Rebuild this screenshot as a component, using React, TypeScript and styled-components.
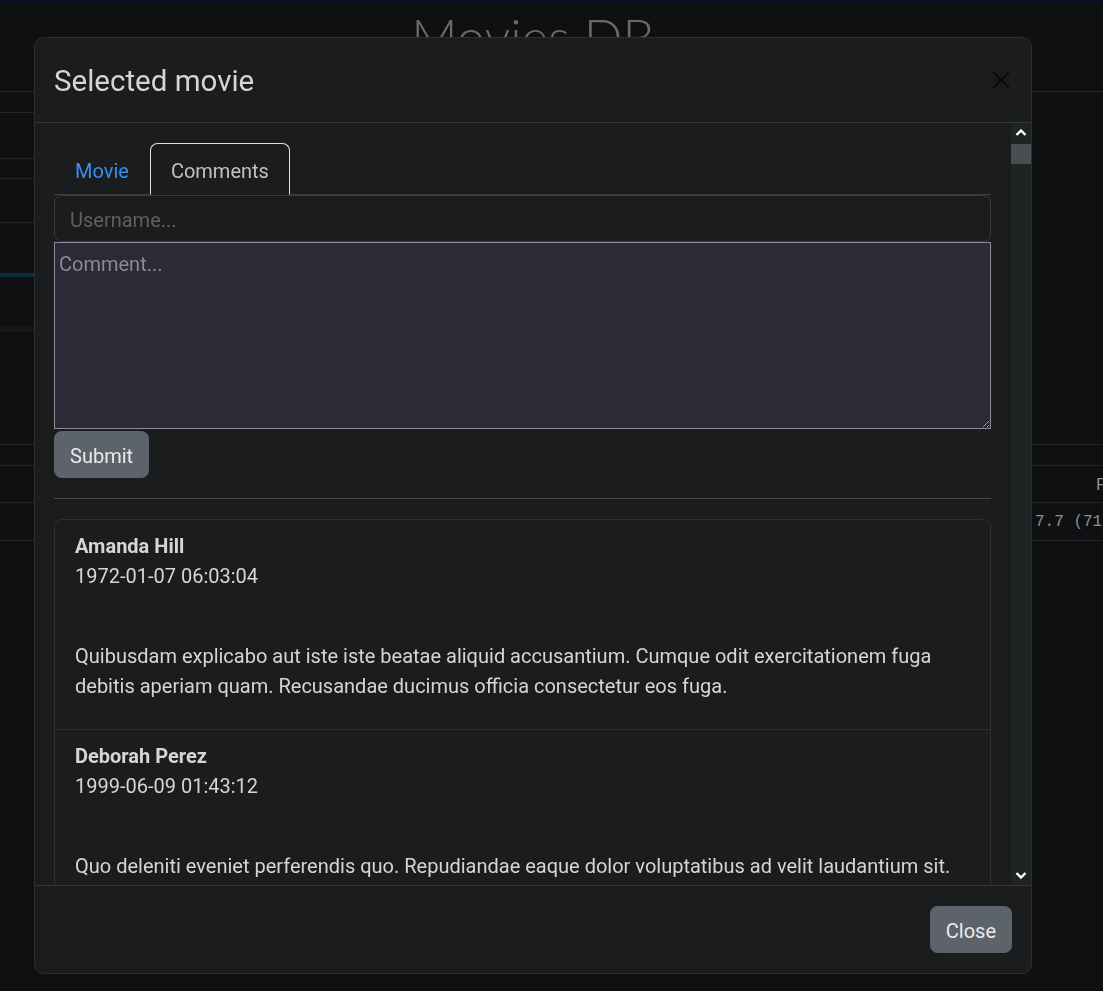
import styled, { createGlobalStyle } from "styled-components"

const GlobalStyle = createGlobalStyle`
  html, body {
    margin: 0;
    padding: 0;
    background: #0e1011;
    overflow: hidden;
  }
  body {
    font-family: Roboto, "Liberation Sans", sans-serif;
    color: #d8d5cf;
  }
  * { box-sizing: border-box; }
`

/* ---------- page behind the modal ---------- */

const Page = styled.div`
  min-height: 100vh;
  background: #0e1011;
  border-top: 2px solid #0b0b3c;
`

const Masthead = styled.header`
  height: 90px;
  border-bottom: 1px solid #25292b;
  display: flex;
  justify-content: center;
  padding-right: 37px;
`

const SiteTitle = styled.h1`
  margin: 0;
  padding-top: 9px;
  font-family: Lato, "Open Sans", sans-serif;
  font-weight: 300;
  font-size: 51px;
  line-height: 1;
  color: #6a6a6a;
`

const Filters = styled.div`
  height: 352px;
  display: flex;
  flex-direction: column;
  width: 360px;
`

const FilterRow = styled.div<{ $h: number }>`
  height: ${p => p.$h}px;
  border-bottom: 1px solid #22262a;
`

const Track = styled.div<{ $color: string; $gap: number; $h: number }>`
  margin-top: ${p => p.$gap}px;
  height: ${p => p.$h}px;
  background: ${p => p.$color};
`

const Table = styled.div`
  border-top: 1px solid #22262a;
  white-space: nowrap;
`

const TableRow = styled.div<{ $h: number; $indent: number }>`
  height: ${p => p.$h}px;
  border-bottom: 1px solid #22262a;
  display: grid;
  grid-template-columns: ${p => p.$indent}px auto;
  align-items: center;
  color: #8e8e8e;
`

const HeadCell = styled.span`
  font-size: 17px;
`

const MonoCell = styled.span`
  font-family: "Liberation Mono", monospace;
  font-size: 16px;
`

/* ---------- modal ---------- */

const Dialog = styled.div`
  position: fixed;
  top: 37px;
  left: 34px;
  width: 998px;
  height: 937px;
  display: flex;
  flex-direction: column;
  background: #1b1c1e;
  border: 1px solid #2c2e31;
  border-radius: 10px;
  overflow: hidden;
`

const Header = styled.div`
  flex: none;
  height: 85px;
  padding: 0 20px 0 19px;
  display: flex;
  align-items: center;
  justify-content: space-between;
  border-bottom: 1px solid #36393c;
`

const Title = styled.h5`
  margin: 0;
  font-size: 29.5px;
  font-weight: 400;
  line-height: 1.2;
  color: #d8d5cf;
  padding-top: 3px;
`

const CloseX = styled.button`
  width: 20px;
  height: 20px;
  padding: 0;
  border: 0;
  background: none;
  display: flex;
  color: #0a0a0a;
`

const BodyFrame = styled.div`
  flex: 1;
  min-height: 0;
  display: flex;
`

const Body = styled.div`
  flex: 1;
  min-width: 0;
  overflow: hidden;
  padding: 20px 20px 0 19px;
`

const ScrollRail = styled.div`
  flex: none;
  width: 20px;
  display: flex;
  flex-direction: column;
  background: #202324;
`

const ScrollArrow = styled.div<{ $end?: boolean }>`
  height: 20px;
  display: flex;
  align-items: center;
  justify-content: center;
  margin-top: ${p => (p.$end ? "auto" : "0")};
  color: #ffffff;
`

const ScrollThumb = styled.div`
  height: 20px;
  margin-top: 1px;
  background: #4a4e51;
`

const Tabs = styled.ul`
  list-style: none;
  margin: 0;
  padding: 0;
  display: flex;
  border-bottom: 1px solid #3a3f42;
`

const Tab = styled.li<{ $active?: boolean }>`
  margin-bottom: -1px;
  padding: 12px 20px 8px;
  font-size: 20px;
  line-height: 30px;
  border: 1px solid ${p => (p.$active ? "#e2e2e2" : "transparent")};
  border-bottom-color: ${p => (p.$active ? "#1b1c1e" : "transparent")};
  border-radius: 7.5px 7.5px 0 0;
  background: ${p => (p.$active ? "#1b1c1e" : "transparent")};
  color: ${p => (p.$active ? "#c4c1bc" : "#3391f0")};
  cursor: pointer;
`

const Input = styled.input`
  display: block;
  width: 100%;
  height: 47px;
  padding: 8.5px 15px 6.5px;
  font-family: inherit;
  font-size: 20px;
  color: #d8d5cf;
  background: #1b1c1e;
  border: 1px solid #3a3d40;
  border-radius: 7.5px;
  outline: none;

  &::placeholder {
    color: #5e6164;
  }
`

const TextArea = styled.textarea`
  display: block;
  width: 100%;
  height: 187px;
  margin: 0;
  padding: 6px 4px;
  font-family: inherit;
  font-size: 20px;
  line-height: 30px;
  color: #d8d5cf;
  background: #2c2a37;
  border: 1px solid #8d8b9a;
  border-radius: 0;
  outline: none;
  color-scheme: dark;

  &::placeholder {
    color: #8b8a92;
  }
`

const Button = styled.button`
  padding: 8.5px 15px 6.5px;
  font-family: inherit;
  font-size: 20px;
  line-height: 30px;
  color: #ebebeb;
  background: #5c636a;
  border: 1px solid #5c636a;
  border-radius: 7.5px;
  cursor: pointer;
`

const SubmitRow = styled.div`
  margin-top: 2px;
`

const Rule = styled.hr`
  margin: 20px 0;
  border: 0;
  border-top: 1px solid #45474a;
`

const CommentList = styled.ul`
  list-style: none;
  margin: 0;
  padding: 0;
  border: 1px solid #2d2f32;
  border-radius: 7.5px;
`

const CommentItem = styled.li`
  padding: 11px 20px 9px;
  font-size: 20px;
  line-height: 30px;
  border-bottom: 1px solid #2d2f32;

  &:last-child {
    border-bottom: 0;
  }
`

const Author = styled.strong`
  display: block;
  font-weight: 700;
  color: #d8d5cf;
`

const Stamp = styled.p`
  margin: 0 0 50px;
`

const Text = styled.p`
  margin: 0 0 19px;
`

const Footer = styled.div`
  flex: none;
  display: flex;
  justify-content: flex-end;
  align-items: center;
  padding: 0 19px;
  height: 88px;
  border-top: 1px solid #36393c;
`

const comments = [
  {
    author: "Amanda Hill",
    date: "1972-01-07 06:03:04",
    text: "Quibusdam explicabo aut iste iste beatae aliquid accusantium. Cumque odit exercitationem fuga debitis aperiam quam. Recusandae ducimus officia consectetur eos fuga.",
  },
  {
    author: "Deborah Perez",
    date: "1999-06-09 01:43:12",
    text: "Quo deleniti eveniet perferendis quo. Repudiandae eaque dolor voluptatibus ad velit laudantium sit.",
  },
]

export default function App() {
  return (
    <>
      <GlobalStyle />
      <Page>
        <Masthead>
          <SiteTitle>Movies DB</SiteTitle>
        </Masthead>
        <Filters>
          <FilterRow $h={21} />
          <FilterRow $h={46} />
          <FilterRow $h={20} />
          <FilterRow $h={44} />
          <Track $color="#0a2d3f" $gap={50} $h={4} />
          <Track $color="#15181a" $gap={50} $h={5} />
        </Filters>
        <Table>
          <TableRow $h={21} $indent={0} />
          <TableRow $h={37} $indent={1096}>
            <span />
            <HeadCell>F</HeadCell>
          </TableRow>
          <TableRow $h={38} $indent={1035}>
            <span />
            <MonoCell>7.7 (71</MonoCell>
          </TableRow>
        </Table>
      </Page>

      <Dialog role="dialog">
        <Header>
          <Title>Selected movie</Title>
          <CloseX aria-label="Close">
            <svg width="20" height="20" viewBox="0 0 20 20">
              <path d="M2 2 L18 18 M18 2 L2 18" stroke="currentColor" strokeWidth="1.8" />
            </svg>
          </CloseX>
        </Header>
        <BodyFrame>
          <Body>
            <Tabs>
              <Tab>Movie</Tab>
              <Tab $active>Comments</Tab>
            </Tabs>
            <Input placeholder="Username..." />
            <TextArea placeholder="Comment..." />
            <SubmitRow>
              <Button>Submit</Button>
            </SubmitRow>
            <Rule />
            <CommentList>
              {comments.map((c, i) => (
                <CommentItem key={i}>
                  <Author>{c.author}</Author>
                  <Stamp>{c.date}</Stamp>
                  <Text>{c.text}</Text>
                </CommentItem>
              ))}
            </CommentList>
          </Body>
          <ScrollRail>
            <ScrollArrow>
              <svg width="12" height="12" viewBox="0 0 12 12">
                <path d="M1.5 8 L6 3.5 L10.5 8" fill="none" stroke="currentColor" strokeWidth="2.4" />
              </svg>
            </ScrollArrow>
            <ScrollThumb />
            <ScrollArrow $end>
              <svg width="12" height="12" viewBox="0 0 12 12">
                <path d="M1.5 4 L6 8.5 L10.5 4" fill="none" stroke="currentColor" strokeWidth="2.4" />
              </svg>
            </ScrollArrow>
          </ScrollRail>
        </BodyFrame>
        <Footer>
          <Button>Close</Button>
        </Footer>
      </Dialog>
    </>
  )
}
